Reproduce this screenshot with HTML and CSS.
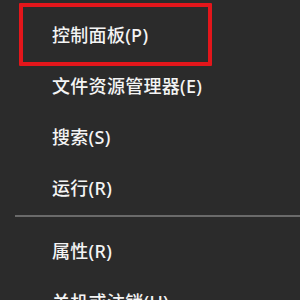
FILE: index.html
```html
<!DOCTYPE html>
<html lang="zh-CN">
<head>
  <meta charset="UTF-8" />
  <title>开始菜单</title>
  <link rel="stylesheet" href="styles.css">
</head>
<body>
  <div class="menu">
    <div class="item">控制面板(P)</div>
    <div class="item">文件资源管理器(E)</div>
    <div class="item">搜索(S)</div>
    <div class="item">运行(R)</div>
    <div class="sep"></div>
    <div class="item">属性(R)</div>
    <div class="item">关机或注销(U)</div>
    <div class="highlight"></div>
  </div>
</body>
</html>
```

FILE: styles.css
```css
html, body {
  margin: 0;
  background: #2b2b2b;
}
body {
  width: 300px;
  height: 300px;
  overflow: hidden;
  font-family: "Noto Sans", "Noto Sans CJK SC", sans-serif;
  color: #f4f4f4;
}
.menu {
  position: relative;
  padding-top: 8px;
}
.item {
  height: 51px;
  display: flex;
  align-items: center;
  padding-left: 52px;
  font-size: 18px;
  font-weight: 500;
  letter-spacing: 0.3px;
  white-space: nowrap;
}
.sep {
  height: 2px;
  background: #6a6a6a;
  margin: 3px 0 7px 15px;
}
/* red frame around the first entry */
.highlight {
  position: absolute;
  left: 19px;
  top: 3px;
  width: 185px;
  height: 55px;
  border: 4px solid #e3161b;
  border-radius: 1px;
}
```
